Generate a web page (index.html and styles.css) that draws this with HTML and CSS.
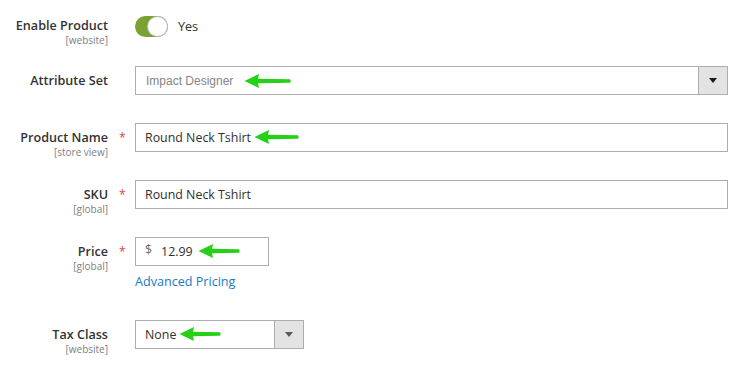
FILE: index.html
```html
<!DOCTYPE html>
<html>
<head>
<meta charset="utf-8">
<link rel="stylesheet" href="styles.css">
</head>
<body>
<div class="form">
  <div class="field first">
    <div class="label"><span class="title">Enable Product</span><span class="scope">[website]</span></div>
    <div class="req"></div>
    <div class="control toggle-wrap">
      <span class="toggle"><span class="knob"></span></span>
      <span class="toggle-text">Yes</span>
    </div>
  </div>

  <div class="field">
    <div class="label"><span class="title">Attribute Set</span></div>
    <div class="req"></div>
    <div class="control">
      <div class="box select wide">
        <span class="value arial">Impact Designer</span>
        <svg class="arrow a-attr" width="49" height="20" viewBox="0 0 49 20"><path d="M1.5 10 L16 3 L15 7.7 L47 8.2 Q48.5 10 47 11.8 L15 12.3 L16 17 Z"/></svg>
        <span class="btn"><span class="caret"></span></span>
      </div>
    </div>
  </div>

  <div class="field">
    <div class="label"><span class="title">Product Name</span><span class="scope">[store view]</span></div>
    <div class="req">*</div>
    <div class="control">
      <div class="box wide">
        <span class="value">Round Neck Tshirt</span>
        <svg class="arrow a-name" width="47" height="20" viewBox="0 0 47 20"><path d="M1.5 10 L16 3 L15 7.7 L45 8.2 Q46.5 10 45 11.8 L15 12.3 L16 17 Z"/></svg>
      </div>
    </div>
  </div>

  <div class="field">
    <div class="label"><span class="title">SKU</span><span class="scope">[global]</span></div>
    <div class="req">*</div>
    <div class="control">
      <div class="box wide">
        <span class="value">Round Neck Tshirt</span>
      </div>
    </div>
  </div>

  <div class="field price-field">
    <div class="label"><span class="title">Price</span><span class="scope">[global]</span></div>
    <div class="req">*</div>
    <div class="control column">
      <div class="box price">
        <span class="currency">$</span>
        <span class="value">12.99</span>
        <svg class="arrow a-price" width="44" height="20" viewBox="0 0 44 20"><path d="M1.5 10 L16 3 L15 7.7 L42 8.2 Q43.5 10 42 11.8 L15 12.3 L16 17 Z"/></svg>
      </div>
      <a class="link">Advanced Pricing</a>
    </div>
  </div>

  <div class="field">
    <div class="label"><span class="title">Tax Class</span><span class="scope">[website]</span></div>
    <div class="req"></div>
    <div class="control">
      <div class="box select tax">
        <span class="value">None</span>
        <svg class="arrow a-tax" width="44" height="20" viewBox="0 0 44 20"><path d="M1.5 10 L16 3 L15 7.7 L42 8.2 Q43.5 10 42 11.8 L15 12.3 L16 17 Z"/></svg>
        <span class="btn"><span class="caret"></span></span>
      </div>
    </div>
  </div>
</div>
<svg width="0" height="0" class="defs">
  <defs>
    <filter id="soft" x="-10%" y="-30%" width="120%" height="160%"><feGaussianBlur stdDeviation="0.7"/></filter>
  </defs>
</svg>
</body>
</html>
```

FILE: styles.css
```css
* { box-sizing: border-box; }
html, body { margin: 0; padding: 0; background: #fff; }
body {
  font-family: "Open Sans", "Liberation Sans", sans-serif;
  color: #303030;
  width: 749px;
  height: 368px;
  overflow: hidden;
}
.form {
  padding: 11px 21px 0 0;
}
.field {
  display: flex;
  align-items: flex-start;
  margin-bottom: 28px;
}
.field.first {
  margin-bottom: 25px;
}
.first .label,
.first .control {
  height: 30px;
}
.label {
  width: 108px;
  height: 29px;
  flex: none;
  display: flex;
  flex-direction: column;
  align-items: flex-end;
  padding-top: 7px;
  text-align: right;
}
.title {
  font-size: 12.6px;
  font-weight: 600;
  line-height: 15px;
  color: #333;
  white-space: nowrap;
}
.scope {
  font-size: 10px;
  line-height: 14px;
  color: #808080;
  white-space: nowrap;
}
.req {
  width: 27px;
  flex: none;
  color: #e04343;
  font-size: 12px;
  line-height: 16px;
  padding-top: 7px;
  padding-left: 11px;
}
.control {
  flex: 1;
  min-width: 0;
  display: flex;
}
.control.column {
  flex-direction: column;
  align-items: flex-start;
}
.toggle-wrap {
  align-items: center;
}
.toggle {
  width: 33px;
  height: 21px;
  border-radius: 11px;
  background: #79a22e;
  display: flex;
  justify-content: flex-end;
  align-items: center;
  padding-right: 1px;
}
.knob {
  width: 19px;
  height: 19px;
  border-radius: 50%;
  background: #fff;
  box-shadow: 0 0 0 1px #bcbcbc;
}
.toggle-text {
  margin-left: 10px;
  font-size: 12.6px;
  color: #303030;
}
.box {
  height: 29px;
  border: 1px solid #adadad;
  background: #fff;
  display: flex;
  align-items: center;
  padding-left: 9px;
}
.box.wide { flex: 1; }
.box.price { width: 134px; }
.box.tax { width: 169px; }
.value {
  font-size: 12.4px;
  color: #303030;
  white-space: nowrap;
}
.value.arial {
  font-family: "Liberation Sans", Arial, sans-serif;
  font-size: 12px;
  color: #858585;
  padding-left: 1px;
}
.currency {
  font-size: 12.4px;
  color: #6b6b6b;
  margin-right: 9px;
  margin-top: -4px;
}
.arrow {
  flex: none;
  fill: #25d016;
  filter: url(#soft);
}
.a-attr { margin-left: 10px; }
.a-name { margin-left: 2px; margin-top: -2px; }
.a-price { margin-left: 4px; margin-top: -2px; }
.a-tax { margin-left: 2px; margin-top: -2px; }
.btn {
  margin-left: auto;
  width: 29px;
  height: 100%;
  background: #e3e3e3;
  border-left: 1px solid #adadad;
  display: flex;
  align-items: center;
  justify-content: center;
}
.caret {
  width: 0;
  height: 0;
  border-left: 4px solid transparent;
  border-right: 4px solid transparent;
  border-top: 5px solid #1a1a1a;
}
.tax .caret { border-top-color: #5a5a5a; }
.link {
  margin-top: 7px;
  font-size: 12.6px;
  line-height: 18px;
  color: #1979c3;
}
.price-field { margin-bottom: 29px; }
.defs { position: absolute; }
```
